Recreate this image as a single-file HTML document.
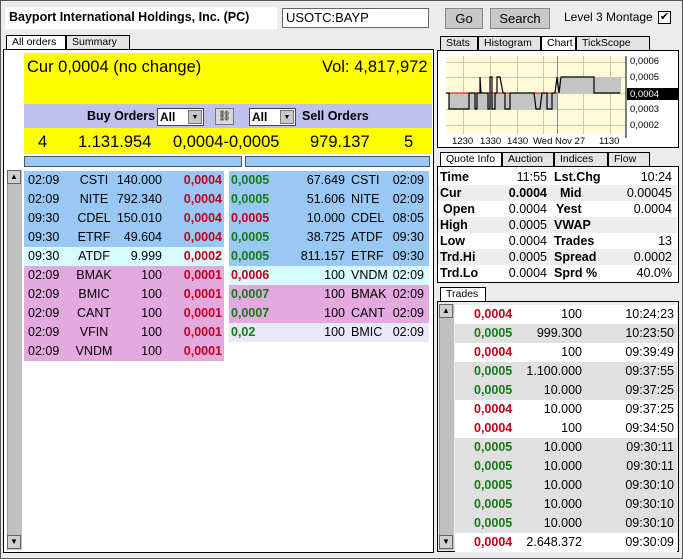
<!DOCTYPE html>
<html><head><meta charset="utf-8"><style>
*{box-sizing:border-box;margin:0;padding:0}
body{width:683px;height:559px;background:#ececec;font-family:"Liberation Sans",sans-serif;font-size:12px;position:relative;overflow:hidden;color:#000}
.a{position:absolute}
.tab{position:absolute;height:14px;border:1px solid #000;border-bottom:none;background:#e4e4e4;font-size:10.5px;line-height:13px;padding-left:5px}
.tab.on{background:#fff}
.row{position:absolute;height:19px;line-height:19px;font-size:12.5px}
.row span{position:absolute}
.r{color:#c0001a;font-weight:bold}
.g{color:#167a16;font-weight:bold}
.btn{position:absolute;background:#c8c8c8;border:1px solid #888;text-align:center;font-size:13px;line-height:20px}
.q{position:absolute;font-size:12.5px;height:16px;line-height:16px;left:0;width:239px}
.q b{position:absolute}
.q span{position:absolute;text-align:right}
.t{position:absolute;left:17px;width:222px;height:19px;line-height:19px;font-size:12.5px}
.t span{position:absolute;text-align:right}
.sb{position:absolute;background:#c0c0c0;border-left:1px solid #999}
.arr{position:absolute;width:14px;height:14px;background:#d0d0d0;border:1px solid #666;font-size:8px;text-align:center;line-height:12px}
</style></head><body>
<div class="a" style="left:0;top:0;width:683px;height:559px;border:1px solid #555"></div>
<div class="a" style="left:5px;top:7px;width:272px;height:22px;background:#fff"></div>
<div class="a" style="left:9px;top:10px;font-weight:bold;font-size:12.5px">Bayport International Holdings, Inc. (PC)</div>
<div class="a" style="left:282px;top:8px;width:147px;height:20px;background:#fff;border:1px solid #666;font-size:13px;padding-left:3px;line-height:18px">USOTC:BAYP</div>
<div class="btn" style="left:445px;top:8px;width:38px;height:21px">Go</div>
<div class="btn" style="left:490px;top:8px;width:60px;height:21px">Search</div>
<div class="a" style="left:564px;top:10px;font-size:12px">Level 3 Montage</div>
<div class="a" style="left:658px;top:11px;width:13px;height:13px;border:1px solid #000;background:#fff;font-size:11px;line-height:11px;text-align:center">✔</div>

<div class="tab on" style="left:6px;top:35px;width:60px">All orders</div>
<div class="tab" style="left:66px;top:35px;width:64px">Summary</div>
<div class="a" style="left:3px;top:49px;width:431px;height:504px;border:1px solid #000;background:#fff"></div>
<div class="a" style="left:24px;top:53px;width:408px;height:51px;background:#ffff00"></div>
<div class="a" style="left:27px;top:58px;font-size:16.5px">Cur 0,0004 (no change)</div>
<div class="a" style="left:322px;top:58px;font-size:16.5px">Vol: 4,817,972</div>
<div class="a" style="left:24px;top:104px;width:408px;height:24px;background:#c0c0ec"></div>
<div class="a" style="left:87px;top:109px;font-weight:bold;font-size:12.5px">Buy Orders</div>
<div class="a" style="left:157px;top:108px;width:47px;height:18px;background:#fff;border:1px solid #444;font-weight:bold;padding-left:2px;line-height:16px">All<div class="a" style="right:1px;top:1px;width:14px;height:14px;background:#c8c8c8;border:1px solid #777;font-size:7px;text-align:center;line-height:13px">▼</div></div>
<div class="a" style="left:215px;top:108px;width:19px;height:17px;background:#d8d8d8;border:1px solid #777;font-size:10px;text-align:center;line-height:15px">⛓</div>
<div class="a" style="left:249px;top:108px;width:47px;height:18px;background:#fff;border:1px solid #444;font-weight:bold;padding-left:2px;line-height:16px">All<div class="a" style="right:1px;top:1px;width:14px;height:14px;background:#c8c8c8;border:1px solid #777;font-size:7px;text-align:center;line-height:13px">▼</div></div>
<div class="a" style="left:302px;top:109px;font-weight:bold;font-size:12.5px">Sell Orders</div>
<div class="a" style="left:24px;top:128px;width:408px;height:26px;background:#ffff00;font-size:16.5px"></div>
<div class="a" style="left:38px;top:133px;font-size:16.5px">4</div>
<div class="a" style="left:78px;top:133px;font-size:16.5px">1.131.954</div>
<div class="a" style="left:173px;top:133px;font-size:16.5px">0,0004-0,0005</div>
<div class="a" style="left:310px;top:133px;font-size:16.5px">979.137</div>
<div class="a" style="left:404px;top:133px;font-size:16.5px">5</div>
<div class="a" style="left:24px;top:156px;width:218px;height:11px;background:#99c8f4;border:1px solid #555"></div>
<div class="a" style="left:245px;top:156px;width:185px;height:11px;background:#99c8f4;border:1px solid #555"></div>
<div class="sb" style="left:7px;top:170px;width:15px;height:380px"></div>
<div class="arr" style="left:7px;top:170px">▲</div>
<div class="arr" style="left:7px;top:535px">▼</div>

<div id="L"></div>

<div class="tab" style="left:440px;top:36px;width:38px">Stats</div>
<div class="tab" style="left:478px;top:36px;width:63px">Histogram</div>
<div class="tab on" style="left:541px;top:36px;width:35px">Chart</div>
<div class="tab" style="left:576px;top:36px;width:74px">TickScope</div>
<div class="a" style="left:437px;top:50px;width:242px;height:98px;border:1px solid #000;background:#fff"></div>
<svg class="a" style="left:437px;top:50px" width="242" height="98">
<rect x="9" y="6" width="180" height="78" fill="#fffbd8"/>
<g stroke="#c8c8b0" stroke-width="1">
<line x1="9" y1="12.5" x2="189" y2="12.5"/><line x1="9" y1="27.5" x2="189" y2="27.5"/><line x1="9" y1="43.5" x2="189" y2="43.5"/><line x1="9" y1="59.5" x2="189" y2="59.5"/><line x1="9" y1="75.5" x2="189" y2="75.5"/>
<line x1="26.5" y1="6" x2="26.5" y2="84"/><line x1="53.5" y1="6" x2="53.5" y2="84"/><line x1="80.5" y1="6" x2="80.5" y2="84"/><line x1="106.5" y1="6" x2="106.5" y2="84"/><line x1="146.5" y1="6" x2="146.5" y2="84"/><line x1="173.5" y1="6" x2="173.5" y2="84"/>
</g>
<line x1="120.5" y1="6" x2="120.5" y2="84" stroke="#888"/>
<rect x="12" y="43" width="108" height="16" fill="#c4c4c4"/>
<rect x="120" y="27" width="64" height="16" fill="#c4c4c4"/>
<line x1="9" y1="43" x2="120" y2="43" stroke="#d00"/>
<polyline fill="none" stroke="#000" stroke-width="1.2" points="9,43 12,43 12,59 32,59 32,43 38,43 38,59 40,59 40,43 43,43 43,27 44,43 51,43 51,59 53,59 53,27 55,27 55,59 58,59 58,43 60,43 60,27 63,27 66,43 68,43 68,59 73,59 73,43 97,43 99,59 103,59 105,43 110,43 110,59 115,59 115,43 118,43 120,27 122,43 124,27 157,27 157,43 183,43"/>
<line x1="189" y1="6" x2="189" y2="88" stroke="#000"/>
<g font-size="9.5" font-family="Liberation Sans">
<text x="193" y="14">0,0006</text><text x="193" y="30">0,0005</text>
<rect x="190" y="38" width="52" height="12" fill="#000"/><text x="193" y="47" fill="#fff">0,0004</text>
<text x="193" y="62">0,0003</text><text x="193" y="78">0,0002</text>
<text x="15" y="94">1230</text><text x="43" y="94">1330</text><text x="70" y="94">1430</text><text x="96" y="94">Wed Nov 27</text><text x="162" y="94">1130</text>
</g></svg>

<div class="tab on" style="left:440px;top:152px;width:62px">Quote Info</div>
<div class="tab" style="left:502px;top:152px;width:52px">Auction</div>
<div class="tab" style="left:554px;top:152px;width:54px">Indices</div>
<div class="tab" style="left:608px;top:152px;width:42px">Flow</div>
<div class="a" style="left:437px;top:166px;width:242px;height:117px;border:1px solid #000;background:#fff">
<div class="q" style="top:2px"><b style="left:2px">Time</b><span style="right:130px">11:55</span><b style="left:116px">Lst.Chg</b><span style="right:5px">10:24</span></div>
<div class="q" style="top:18px;background:#eee"><b style="left:2px">Cur</b><b style="right:130px">0.0004</b><b style="left:122px">Mid</b><span style="right:5px">0.00045</span></div>
<div class="q" style="top:34px"><b style="left:5px">Open</b><span style="right:130px">0.0004</span><b style="left:118px">Yest</b><span style="right:5px">0.0004</span></div>
<div class="q" style="top:50px;background:#eee"><b style="left:2px">High</b><span style="right:130px">0.0005</span><b style="left:116px">VWAP</b></div>
<div class="q" style="top:66px"><b style="left:2px">Low</b><span style="right:130px">0.0004</span><b style="left:116px">Trades</b><span style="right:5px">13</span></div>
<div class="q" style="top:82px;background:#eee"><b style="left:2px">Trd.Hi</b><span style="right:130px">0.0005</span><b style="left:116px">Spread</b><span style="right:5px">0.0002</span></div>
<div class="q" style="top:98px"><b style="left:2px">Trd.Lo</b><span style="right:130px">0.0004</span><b style="left:116px">Sprd %</b><span style="right:5px">40.0%</span></div>
</div>
<div class="tab on" style="left:440px;top:287px;width:46px">Trades</div>
<div class="a" style="left:437px;top:301px;width:242px;height:251px;border:1px solid #000"></div>
<div id="T"></div>
<div class="sb" style="left:439px;top:304px;width:15px;height:246px"></div>
<div class="arr" style="left:439px;top:304px">▲</div>
<div class="arr" style="left:439px;top:535px">▼</div>

<script>
var L=[["02:09","CSTI","140.000","0,0004","#99c8f4"],["02:09","NITE","792.340","0,0004","#99c8f4"],["09:30","CDEL","150.010","0,0004","#99c8f4"],["09:30","ETRF","49.604","0,0004","#99c8f4"],["09:30","ATDF","9.999","0,0002","#d8fcfc"],["02:09","BMAK","100","0,0001","#e4aae0"],["02:09","BMIC","100","0,0001","#e4aae0"],["02:09","CANT","100","0,0001","#e4aae0"],["02:09","VFIN","100","0,0001","#e4aae0"],["02:09","VNDM","100","0,0001","#e4aae0"]];
var R=[["0,0005","g","67.649","CSTI","02:09","#99c8f4"],["0,0005","g","51.606","NITE","02:09","#99c8f4"],["0,0005","r","10.000","CDEL","08:05","#99c8f4"],["0,0005","g","38.725","ATDF","09:30","#99c8f4"],["0,0005","g","811.157","ETRF","09:30","#99c8f4"],["0,0006","r","100","VNDM","02:09","#d8fcfc"],["0,0007","g","100","BMAK","02:09","#e4aae0"],["0,0007","g","100","CANT","02:09","#e4aae0"],["0,02","g","100","BMIC","02:09","#e8e8f8"]];
var h="";
L.forEach(function(r,i){var y=171+i*19;h+='<div class="row" style="left:24px;top:'+y+'px;width:200px;background:'+r[4]+'"><span style="left:4px">'+r[0]+'</span><span style="left:44px;width:52px;text-align:center">'+r[1]+'</span><span style="right:62px">'+r[2]+'</span><span class="r" style="right:2px">'+r[3]+'</span></div>';});
R.forEach(function(r,i){var y=171+i*19;h+='<div class="row" style="left:229px;top:'+y+'px;width:200px;background:'+r[5]+'"><span class="'+r[1]+'" style="left:2px">'+r[0]+'</span><span style="right:84px">'+r[2]+'</span><span style="left:122px">'+r[3]+'</span><span style="right:5px">'+r[4]+'</span></div>';});
document.getElementById("L").innerHTML=h;
var T=[["r","0,0004","100","10:24:23","#fff"],["g","0,0005","999.300","10:23:50","#e0e0e0"],["r","0,0004","100","09:39:49","#fff"],["g","0,0005","1.100.000","09:37:55","#e0e0e0"],["g","0,0005","10.000","09:37:25","#e0e0e0"],["r","0,0004","10.000","09:37:25","#fff"],["r","0,0004","100","09:34:50","#fff"],["g","0,0005","10.000","09:30:11","#e0e0e0"],["g","0,0005","10.000","09:30:11","#e0e0e0"],["g","0,0005","10.000","09:30:10","#e0e0e0"],["g","0,0005","10.000","09:30:10","#e0e0e0"],["g","0,0005","10.000","09:30:10","#e0e0e0"],["r","0,0004","2.648.372","09:30:09","#fff"]];
h="";
T.forEach(function(r,i){var y=305+i*19;h+='<div class="t" style="left:455px;top:'+y+'px;width:222px;background:'+r[4]+'"><span class="'+r[0]+'" style="left:19px">'+r[1]+'</span><span style="right:95px">'+r[2]+'</span><span style="right:3px">'+r[3]+'</span></div>';});
document.getElementById("T").innerHTML=h;
</script>
</body></html>
